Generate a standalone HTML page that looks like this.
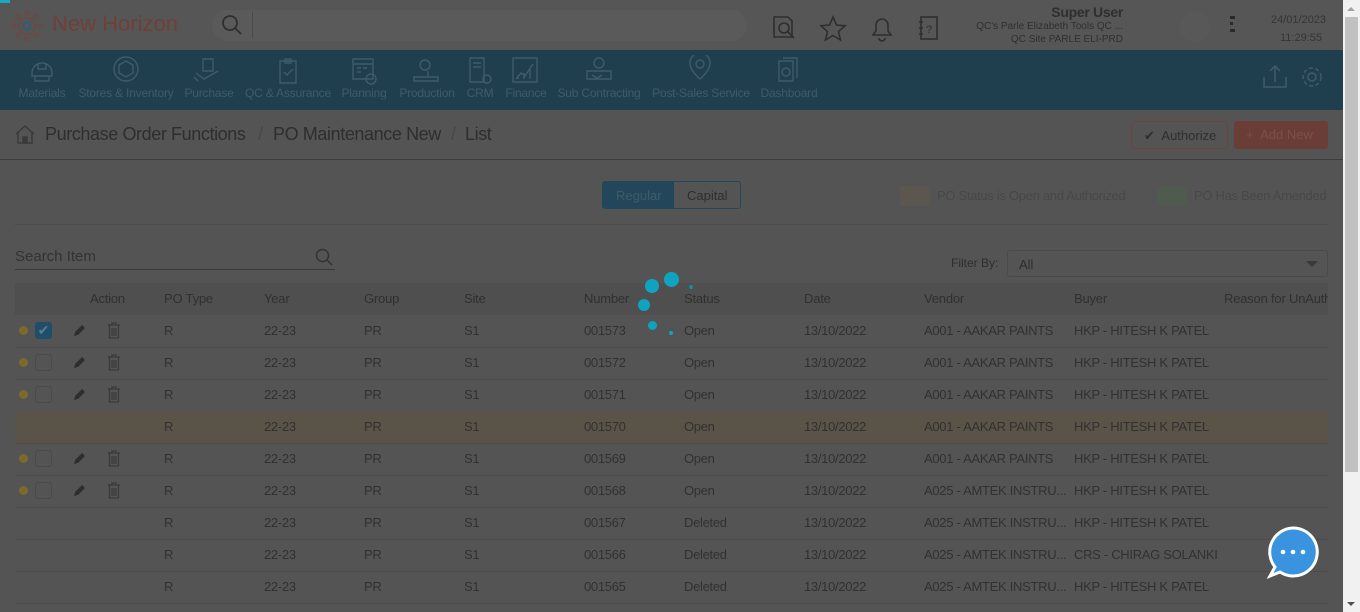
<!DOCTYPE html>
<html><head><meta charset="utf-8"><style>
*{margin:0;padding:0;box-sizing:border-box}
body{width:1360px;height:612px;overflow:hidden;background:#545454;font-family:"Liberation Sans",sans-serif;color:#2e2e2e;position:relative}
.a{position:absolute;white-space:nowrap}
.hdr{left:0;top:0;width:1343px;height:50px;background:#565656}
.nav{left:0;top:50px;width:1343px;height:60px;background:#1f3f4f}
.nl{top:86px;font-size:12px;color:#3f5b68;transform:translateX(-50%);letter-spacing:-0.2px}
.th{font-size:13px;color:#303030;top:291px;letter-spacing:-0.2px}
.td{font-size:13px;color:#313131;letter-spacing:-0.3px}
.line{height:1px;background:#4b4b4b;left:15px;width:1313px}
.bc{top:124px;font-size:18px;color:#2e2e2e;letter-spacing:-0.4px}
</style></head><body>
<div class="a" style="left:0;top:0;width:10px;height:3px;background:#19a9c8;z-index:5"></div>
<div class="a hdr"></div>
<svg class="a" style="left:11px;top:10px" width="32" height="32" viewBox="0 0 32 32" fill="none" stroke="#6a4a42" stroke-width="1.5"><circle cx="16" cy="16" r="8"/><circle cx="16" cy="16" r="3.5" stroke="#3a5a70" stroke-width="2.5"/><circle cx="16" cy="3" r="2"/><circle cx="16" cy="29" r="2"/><circle cx="3" cy="16" r="2"/><circle cx="29" cy="16" r="2"/><circle cx="7" cy="7" r="2"/><circle cx="25" cy="25" r="2"/><circle cx="25" cy="7" r="2"/><circle cx="7" cy="25" r="2"/></svg>
<div class="a" style="left:52px;top:11px;font-size:22px;color:#6e4038">New Horizon</div>
<div class="a" style="left:212px;top:10px;width:535px;height:31px;border-radius:16px;background:#5a5a5a"></div>
<svg class="a" style="left:221px;top:14px" width="22" height="22" viewBox="0 0 22 22" fill="none" stroke="#2e2e2e" stroke-width="1.8"><circle cx="9" cy="9" r="7"/><path d="M14 14l6 6"/></svg>
<div class="a" style="left:252px;top:12px;width:1px;height:26px;background:#4a4a4a"></div>
<svg class="a" style="left:771px;top:14px" width="28" height="28" viewBox="0 0 28 28" fill="none" stroke="#2e2e2e" stroke-width="1.6"><path d="M3 3h14l4 4v16H3z"/><circle cx="13" cy="14" r="5"/><path d="M17 18l6 6"/></svg>
<svg class="a" style="left:819px;top:15px" width="28" height="28" viewBox="0 0 28 28" fill="none" stroke="#2e2e2e" stroke-width="1.6"><path d="M14 2l3.5 8 8.5.8-6.5 5.7 2 8.5L14 20.5 6.5 25l2-8.5L2 10.8l8.5-.8z"/></svg>
<svg class="a" style="left:868px;top:14px" width="28" height="28" viewBox="0 0 28 28" fill="none" stroke="#2e2e2e" stroke-width="1.6"><path d="M5 21h18l-3-4v-6a6 6 0 0 0-12 0v6z"/><path d="M11 24a3 3 0 0 0 6 0"/></svg>
<svg class="a" style="left:916px;top:14px" width="26" height="28" viewBox="0 0 26 28" fill="none" stroke="#2e2e2e" stroke-width="1.6"><rect x="5" y="3" width="16" height="22"/><path d="M3 8h4M3 14h4M3 20h4"/><text x="10" y="19" font-size="11" fill="#2e2e2e" stroke="none" font-family="Liberation Sans">?</text></svg>
<div class="a" style="right:237px;top:4px;font-size:14px;color:#2f2f2f;text-align:right;font-weight:bold;letter-spacing:-0.3px">Super User</div>
<div class="a" style="right:237px;top:21px;font-size:10px;color:#2f2f2f;text-align:right">QC's Parle Elizabeth Tools QC ...</div>
<div class="a" style="right:237px;top:34px;font-size:10px;color:#2f2f2f;text-align:right">QC Site PARLE ELI-PRD</div>
<div class="a" style="left:1180px;top:12px;width:30px;height:30px;border-radius:50%;background:#585858"></div>
<div class="a" style="left:1230px;top:16px;width:2px;height:16px;border-top:3px dotted #2a2a2a;border-bottom:3px dotted #2a2a2a"></div>
<div class="a" style="left:1230px;top:22px;width:3px;height:3px;background:#2a2a2a"></div>
<div class="a" style="left:1271px;top:14px;font-size:11px;color:#353535">24/01/2023</div>
<div class="a" style="left:1280px;top:32px;font-size:11px;color:#353535">11:29:55</div>

<div class="a nav"></div>
<svg class="a" style="left:0;top:55px" width="830" height="30" viewBox="0 0 830 30" fill="none" stroke="#3f5b68" stroke-width="1.4">
<path d="M32 18a10 10 0 0 1 20 0v3H32zM38 8v6h8V8M35 22v4h14v-4"/>
<circle cx="126" cy="14" r="12"/><path d="M119 10l7-4 7 4v8l-7 4-7-4z"/>
<path d="M203 4h10v12h-10zM196 18l8 6 14-8M198 26l-4-4"/>
<path d="M280 6h16v22h-16zM285 4h6v4h-6zM284 17l3 3 6-6"/>
<path d="M353 4h20v20h-20zM353 9h20M357 13h4M363 13h4M357 17h4"/><circle cx="371" cy="24" r="5"/>
<circle cx="425" cy="10" r="5"/><path d="M414 22h24v4h-24zM428 16v6"/>
<path d="M470 3h14v24h-14zM473 8h8M473 12h8"/><circle cx="487" cy="24" r="4"/>
<path d="M513 3h24v24h-24zM516 24l5-6 4 3 8-12M518 24v-4M524 24v-6M530 24v-10"/>
<circle cx="599" cy="8" r="5"/><path d="M587 16h24v8h-24zM592 20l5 3 5-3"/>
<path d="M690 8a10 10 0 0 1 20 0c0 8-10 16-10 16S690 16 690 8z"/><circle cx="700" cy="9" r="4"/>
<path d="M779 6h14v20h-14zM783 3h14v20"/><circle cx="786" cy="17" r="4"/>
</svg>
<div class="a nl" style="left:42px">Materials</div>
<div class="a nl" style="left:126px">Stores &amp; Inventory</div>
<div class="a nl" style="left:209px">Purchase</div>
<div class="a nl" style="left:288px">QC &amp; Assurance</div>
<div class="a nl" style="left:364px">Planning</div>
<div class="a nl" style="left:427px">Production</div>
<div class="a nl" style="left:480px">CRM</div>
<div class="a nl" style="left:526px">Finance</div>
<div class="a nl" style="left:599px">Sub Contracting</div>
<div class="a nl" style="left:701px">Post-Sales Service</div>
<div class="a nl" style="left:789px">Dashboard</div>
<svg class="a" style="left:1262px;top:63px" width="68" height="28" viewBox="0 0 68 28" fill="none" stroke="#3f5b68" stroke-width="1.5"><path d="M2 14v10h22V14M13 3v16M8 8l5-5 5 5"/><circle cx="50" cy="14" r="4"/><circle cx="50" cy="14" r="9" stroke-dasharray="4 2.5"/></svg>

<svg class="a" style="left:14px;top:123px" width="22" height="22" viewBox="0 0 22 22" fill="none" stroke="#3a3a3a" stroke-width="1.5"><path d="M2 11L11 3l9 8M4 9v11h14V9"/><rect x="9" y="14" width="4" height="6" fill="#3a3a3a"/></svg>
<div class="a bc" style="left:45px">Purchase Order Functions</div>
<div class="a bc" style="left:258px;color:#474747">/</div>
<div class="a bc" style="left:273px">PO Maintenance New</div>
<div class="a bc" style="left:451px;color:#474747">/</div>
<div class="a bc" style="left:465px">List</div>
<div class="a" style="left:1131px;top:121px;width:97px;height:28px;border:1px solid #6a4540;border-radius:3px;font-size:13px;color:#2e2e2e;padding:6px 0 0 12px">✔&nbsp; Authorize</div>
<div class="a" style="left:1234px;top:121px;width:94px;height:28px;background:#6a3e37;border-radius:3px;font-size:13px;color:#7a5048;padding:6px 0 0 12px">+&nbsp; Add New</div>
<div class="a" style="left:0;top:159px;width:1343px;height:1px;background:#3c3c3c"></div>

<div class="a" style="left:602px;top:181px;width:139px;height:28px;border:1px solid #23475a;border-radius:3px;overflow:hidden"><div style="position:absolute;left:0;top:0;width:71px;height:28px;background:#23475a"></div><span style="position:absolute;left:13px;top:6px;font-size:13px;color:#3f5b68">Regular</span><span style="position:absolute;left:84px;top:6px;font-size:13px;color:#2e2e2e">Capital</span></div>
<div class="a" style="left:900px;top:186px;width:30px;height:20px;background:#5c5650"></div>
<div class="a" style="left:937px;top:188px;font-size:13px;color:#484848;letter-spacing:-0.3px">PO Status is Open and Authorized</div>
<div class="a" style="left:1157px;top:186px;width:30px;height:20px;background:#4e5b4e"></div>
<div class="a" style="left:1194px;top:188px;font-size:13px;color:#484848;letter-spacing:-0.3px">PO Has Been Amended</div>
<div class="a" style="left:15px;top:224px;width:1313px;height:1px;background:#4a4a4a"></div>

<div class="a" style="left:15px;top:248px;font-size:15px;color:#333">Search Item</div>
<svg class="a" style="left:315px;top:248px" width="18" height="18" viewBox="0 0 18 18" fill="none" stroke="#333" stroke-width="1.5"><circle cx="7.5" cy="7.5" r="6"/><path d="M12 12l5 5"/></svg>
<div class="a" style="left:15px;top:269px;width:320px;height:1px;background:#3a3a3a"></div>
<div class="a" style="left:951px;top:256px;font-size:12px;color:#2e2e2e">Filter By:</div>
<div class="a" style="left:1007px;top:250px;width:321px;height:27px;border:1px solid #4a4a4a;border-radius:3px;font-size:13px;padding:6px 0 0 11px">All</div>
<div class="a" style="left:1306px;top:261px;border-left:6px solid transparent;border-right:6px solid transparent;border-top:6px solid #3a3a3a"></div>

<div class="a" style="left:15px;top:283px;width:1313px;height:32px;background:#4f4f4f"></div>
<div class="a th" style="left:90px">Action</div><div class="a th" style="left:164px">PO Type</div><div class="a th" style="left:264px">Year</div><div class="a th" style="left:364px">Group</div><div class="a th" style="left:464px">Site</div><div class="a th" style="left:584px">Number</div><div class="a th" style="left:684px">Status</div><div class="a th" style="left:804px">Date</div><div class="a th" style="left:924px">Vendor</div><div class="a th" style="left:1074px">Buyer</div><div class="a th" style="left:1224px;width:104px;overflow:hidden">Reason for UnAuthorization</div>

<div id="rows"></div>
<script>
var d=[[1,2,'001573','Open','A001 - AAKAR PAINTS','HKP - HITESH K PATEL'],[1,1,'001572','Open','A001 - AAKAR PAINTS','HKP - HITESH K PATEL'],[1,1,'001571','Open','A001 - AAKAR PAINTS','HKP - HITESH K PATEL'],[0,0,'001570','Open','A001 - AAKAR PAINTS','HKP - HITESH K PATEL'],[1,1,'001569','Open','A001 - AAKAR PAINTS','HKP - HITESH K PATEL'],[1,1,'001568','Open','A025 - AMTEK INSTRU...','HKP - HITESH K PATEL'],[0,0,'001567','Deleted','A025 - AMTEK INSTRU...','HKP - HITESH K PATEL'],[0,0,'001566','Deleted','A025 - AMTEK INSTRU...','CRS - CHIRAG SOLANKI'],[0,0,'001565','Deleted','A025 - AMTEK INSTRU...','HKP - HITESH K PATEL']];
var h='';d.forEach(function(r,i){var y=315+i*32;
if(i==3)h+='<div class="a" style="left:15px;top:'+y+'px;width:1313px;height:32px;background:#5a5348"></div>';
h+='<div class="a line" style="top:'+(y+32)+'px"></div>';
var t=y+8;
if(r[0]){h+='<div class="a" style="left:19px;top:'+(y+11)+'px;width:9px;height:9px;border-radius:50%;background:#7a6a2c"></div>';
if(r[1]==2)h+='<div class="a" style="left:35px;top:'+(y+7)+'px;width:17px;height:17px;border-radius:3px;background:#1f4f68;color:#5a7a8a;font-size:14px;text-align:center;line-height:17px">✔</div>';
else h+='<div class="a" style="left:35px;top:'+(y+7)+'px;width:17px;height:17px;border-radius:3px;border:1px solid #4a4a4a"></div>';
h+='<svg class="a" style="left:72px;top:'+(y+9)+'px" width="14" height="14" viewBox="0 0 14 14"><path d="M2 12l1-4 7-7 3 3-7 7z" fill="#2e2e2e"/></svg>';
h+='<svg class="a" style="left:107px;top:'+(y+7)+'px" width="14" height="17" viewBox="0 0 14 17" fill="none" stroke="#3a3a3a" stroke-width="1.2"><path d="M1 3h12M5 3V1h4v2M2.5 3v13h9V3M5 6v8M7 6v8M9 6v8"/></svg>';}
var c=[[164,'R'],[264,'22-23'],[364,'PR'],[464,'S1'],[584,r[2]],[684,r[3]],[804,'13/10/2022'],[924,r[4]],[1074,r[5]]];
c.forEach(function(x){var w=x[0]==924?'width:142px;overflow:hidden;':'';h+='<div class="a td" style="'+w+'left:'+x[0]+'px;top:'+t+'px">'+x[1]+'</div>'});});
document.getElementById('rows').innerHTML=h;
</script>

<div class="a" style="left:645px;top:279px;width:14px;height:14px;border-radius:50%;background:#0fa3bf"></div>
<div class="a" style="left:664px;top:272px;width:15px;height:15px;border-radius:50%;background:#0fa3bf"></div>
<div class="a" style="left:638px;top:299px;width:12px;height:12px;border-radius:50%;background:#0fa3bf"></div>
<div class="a" style="left:648px;top:321px;width:9px;height:9px;border-radius:50%;background:#0fa3bf"></div>
<div class="a" style="left:669px;top:331px;width:4px;height:4px;border-radius:50%;background:#0fa3bf"></div>
<div class="a" style="left:689px;top:285px;width:4px;height:4px;border-radius:50%;background:#1a8aa0"></div>

<svg class="a" style="left:1266px;top:526px" width="54" height="54" viewBox="0 0 54 54"><path d="M27 2a24 24 0 1 1-13 44L4 50l5-9A24 24 0 0 1 27 2z" fill="#3a93de" stroke="#fff" stroke-width="3"/><circle cx="17" cy="26" r="2.3" fill="#fff"/><circle cx="27" cy="26" r="2.3" fill="#fff"/><circle cx="37" cy="26" r="2.3" fill="#fff"/></svg>

<div class="a" style="left:1343px;top:0;width:17px;height:612px;background:#f1f1f1"></div>
<div class="a" style="left:1345px;top:17px;width:13px;height:455px;background:#c1c1c1"></div>
<div class="a" style="left:1347px;top:7px;border-left:4px solid transparent;border-right:4px solid transparent;border-bottom:4px solid #a3a3a3"></div>
<div class="a" style="left:1347px;top:602px;border-left:4px solid transparent;border-right:4px solid transparent;border-top:4px solid #505050"></div>
</body></html>
